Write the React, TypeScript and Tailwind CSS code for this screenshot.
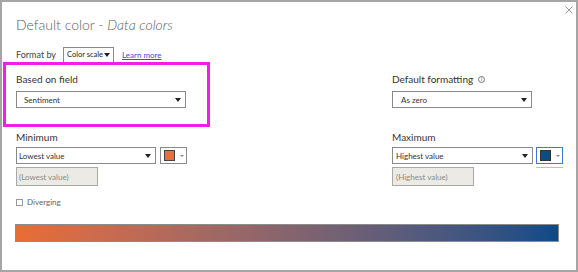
import React from "react";

function Caret() {
  return (
    <span className="inline-block w-0 h-0 shrink-0 border-l-[3px] border-r-[3px] border-t-[4px] border-l-transparent border-r-transparent border-t-[#222]" />
  );
}

function Select({ w, text, pl }: { w: string; text: string; pl: string }) {
  return (
    <div className={`${w} ${pl} h-[17px] border border-[#8a8a8a] bg-white flex items-center justify-between pr-[4px] text-[8px] text-[#333]`}>
      <span>{text}</span>
      <Caret />
    </div>
  );
}

export default function App() {
  return (
    <div
      className="w-[578px] h-[272px] border-2 border-[#a5a5a5] bg-white relative text-[#333]"
      style={{ fontFamily: 'Lato, "Open Sans", sans-serif' }}
    >
      {/* close */}
      <svg className="absolute right-[3px] top-[4px]" width="8" height="8" viewBox="0 0 8 8">
        <path d="M0.5 0.5 L7.5 7.5 M7.5 0.5 L0.5 7.5" stroke="#9a9a9a" strokeWidth="1" />
      </svg>

      <div className="pl-[14px] pt-[12px] text-[14px] font-light text-[#5e5e5e] leading-[22px]">
        Default color - <span className="italic">Data colors</span>
      </div>

      <div className="flex items-center pl-[14px] mt-[11px] h-[16px]">
        <span className="text-[9px] text-[#444] whitespace-nowrap">Format by</span>
        <div className="ml-[7px] h-[16px] w-[51px] border border-[#8a8a8a] flex items-center justify-between pl-[3px] pr-[3px] text-[7.5px] text-[#222] whitespace-nowrap">
          <span>Color scale</span>
          <Caret />
        </div>
        <span className="ml-[8px] text-[8px] text-[#3a4fd0] underline whitespace-nowrap">Learn more</span>
      </div>

      <div className="flex mt-[-1px]">
        <div className="ml-[1px] w-[207px] h-[65px] border-[3px] border-[#f21ee8] pl-[10px] pt-[7px]">
          <div className="text-[10px] leading-[15px] text-[#333]">Based on field</div>
          <div className="mt-[4px]">
            <Select w="w-[170px]" pl="pl-[7px]" text="Sentiment" />
          </div>
        </div>
        <div className="ml-[182px] pt-[10px]">
          <div className="flex items-center text-[10px] leading-[15px] text-[#333]">
            Default formatting
            <span className="ml-[5px] w-[7px] h-[7px] rounded-full border border-[#777] text-[5px] leading-[5px] flex items-center justify-center text-[#555]">i</span>
          </div>
          <div className="mt-[4px]">
            <Select w="w-[140px]" pl="pl-[8px]" text="As zero" />
          </div>
        </div>
      </div>

      <div className="flex mt-[3px]">
        <div className="ml-[14px] w-[376px]">
          <div className="text-[10px] leading-[15px] text-[#333]">Minimum</div>
          <div className="flex mt-[2px] gap-[4px]">
            <Select w="w-[140px]" pl="pl-[2px]" text="Lowest value" />
            <div className="w-[27px] h-[17px] border border-[#8a8a8a] flex items-center pl-[3px] gap-[5px]">
              <span className="w-[11px] h-[11px] bg-[#e8703a] border border-[#444]" />
              <span className="inline-block w-0 h-0 border-l-[2px] border-r-[2px] border-t-[2px] border-l-transparent border-r-transparent border-t-[#888]" />
            </div>
          </div>
          <div className="mt-[3px] w-[82px] h-[19px] border border-[#a8a8a8] bg-[#ebeae4] flex items-center pl-[2px] text-[8px] text-[#8a8a8a]">
            (Lowest value)
          </div>
          <div className="mt-[10px] flex items-center gap-[4px] text-[8px] text-[#666]">
            <span className="w-[7px] h-[7px] border border-[#999] bg-white" />
            Diverging
          </div>
        </div>
        <div>
          <div className="text-[10px] leading-[15px] text-[#333]">Maximum</div>
          <div className="flex mt-[2px] gap-[3px]">
            <Select w="w-[141px]" pl="pl-[3px]" text="Highest value" />
            <div className="flex flex-col">
              <div className="w-[27px] h-[17px] border border-[#3d78d8] flex items-center pl-[3px] gap-[5px]">
                <span className="w-[11px] h-[11px] bg-[#0d4a86] border border-[#333]" />
                <span className="inline-block w-0 h-0 border-l-[2px] border-r-[2px] border-t-[2px] border-l-transparent border-r-transparent border-t-[#888]" />
              </div>
              <div className="mt-[3px] h-[1px] w-[27px] bg-[#a9c4ee]" />
            </div>
          </div>
          <div className="mt-[-1px] w-[82px] h-[19px] border border-[#a8a8a8] bg-[#ebeae4] flex items-center pl-[3px] text-[8px] text-[#8a8a8a]">
            (Highest value)
          </div>
        </div>
      </div>

      <div className="ml-[13px] mt-[16px] w-[544px] h-[18px] border border-[#8c8c8c] bg-gradient-to-r from-[#e96c34] to-[#0a4a88]" />
    </div>
  );
}
